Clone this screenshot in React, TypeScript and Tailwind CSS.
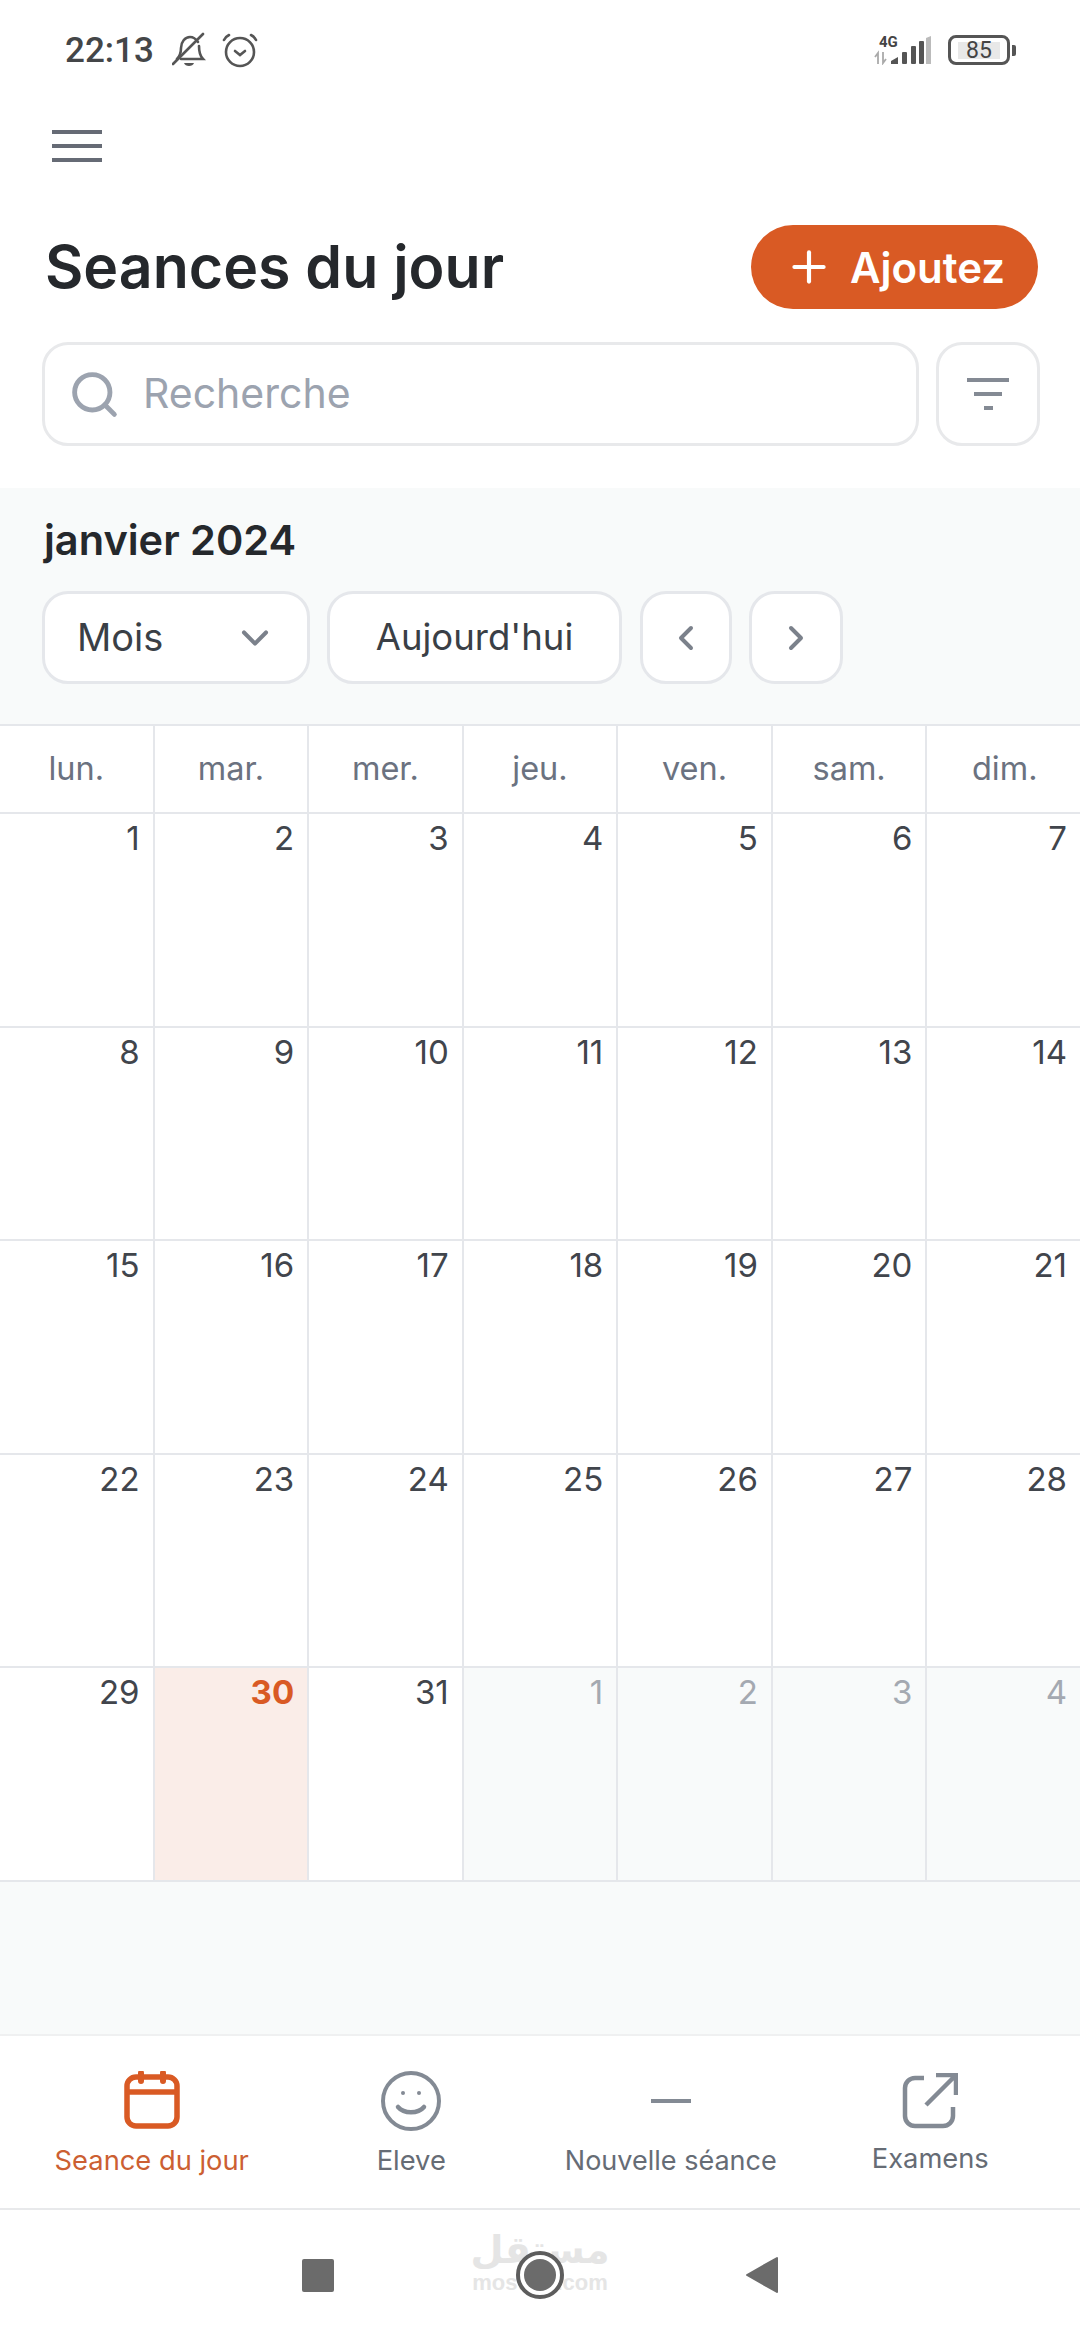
import { ChevronDown, ChevronLeft, ChevronRight, Plus, Search } from 'lucide-react';

const days = ['lun.', 'mar.', 'mer.', 'jeu.', 'ven.', 'sam.', 'dim.'];

const weeks = [
  [1, 2, 3, 4, 5, 6, 7],
  [8, 9, 10, 11, 12, 13, 14],
  [15, 16, 17, 18, 19, 20, 21],
  [22, 23, 24, 25, 26, 27, 28],
  [29, 30, 31, 1, 2, 3, 4],
];

function StatusBar() {
  return (
    <div className="h-[100px] flex items-center justify-between pl-[65px] pr-[64px] font-['Roboto',sans-serif]">
      <div className="flex items-center">
        <span className="text-[35px] leading-none font-medium text-[#444648]">22:13</span>
        <svg className="ml-[18px]" width="34" height="36" viewBox="0 0 34 36" fill="none" stroke="#555" strokeWidth="2.6">
          <path d="M5 27c3-3 4-6 4-11 0-6 4-11 9-11 4 0 6 2 8 5M27 14c0 6 1 10 4 13H9" strokeLinecap="round" />
          <path d="M1 32 31 2" strokeLinecap="round" />
          <path d="M12 31h10c-1 4-9 4-10 0z" fill="#555" stroke="none" />
        </svg>
        <svg className="ml-[16px]" width="36" height="36" viewBox="0 0 36 36" fill="none" stroke="#555" strokeWidth="2.6" strokeLinecap="round">
          <circle cx="18" cy="20" r="14" />
          <path d="m13 19 5 4 5-4" />
          <path d="M2 8c1-2 3-4 5-5M34 8c-1-2-3-4-5-5" />
        </svg>
      </div>
      <div className="flex items-center">
        <svg className="-mt-[8px]" width="58" height="38" viewBox="0 -8 58 38">
          <text x="5" y="12" fontSize="15" fontWeight="700" fill="#444" fontFamily="Roboto, sans-serif">4G</text>
          <path d="M4 29V18L1 22M9 17v11l3-4" fill="none" stroke="#aaa" strokeWidth="1.8" />
          <path d="M17 29v-3l7-4v7z" fill="#555" />
          <rect x="28" y="17" width="5" height="12" rx="1" fill="#555" />
          <rect x="37" y="11" width="5" height="18" rx="1" fill="#555" />
          <rect x="45" y="6" width="5" height="23" rx="1" fill="#555" />
          <path d="M52 3l5-2v28h-5z" fill="#bbb" />
        </svg>
        <div className="ml-[16px] flex items-center">
          <div className="w-[62px] h-[30px] rounded-[8px] border-[3.5px] border-[#555] flex items-center justify-center">
            <span className="w-[42px] h-[17px] bg-[#e8e8e8] flex items-center justify-center text-[23px] leading-none text-[#444]">85</span>
          </div>
          <span className="ml-[2px] w-[4px] h-[11px] rounded-r-[2px] bg-[#555]" />
        </div>
      </div>
    </div>
  );
}

function Header() {
  return (
    <div className="px-[42px]">
      <div className="h-[62px] pt-[30px] pl-[10px] box-content">
        <div className="w-[50px] flex flex-col gap-[10px]">
          <span className="h-[4px] bg-[#666b75]" />
          <span className="h-[4px] bg-[#666b75]" />
          <span className="h-[4px] bg-[#666b75]" />
        </div>
      </div>
      <div className="mt-[33px] flex items-center justify-between">
        <h1 className="pl-[3px] text-[59px] leading-[84px] font-semibold text-[#25282c]">Seances du jour</h1>
        <button className="w-[287px] h-[84px] rounded-full bg-[#d95a24] flex items-center justify-center gap-[16px] text-white text-[42px] font-semibold">
          <Plus size={50} strokeWidth={2} />
          Ajoutez
        </button>
      </div>
      <div className="mt-[33px] flex items-stretch justify-between h-[104px]">
        <div className="w-[877px] rounded-[26px] border-[3px] border-[#e8e9eb] flex items-center pl-[23px]">
          <Search size={53} strokeWidth={2.2} className="text-[#9ca3af]" />
          <span className="ml-[22px] text-[41px] text-[#9ca3af]">Recherche</span>
        </div>
        <div className="w-[104px] mr-[-2px] rounded-[26px] border-[3px] border-[#e8e9eb] flex flex-col items-center justify-center gap-[10px]">
          <span className="w-[42px] h-[4px] bg-[#848a94]" />
          <span className="w-[28px] h-[4px] bg-[#848a94]" />
          <span className="w-[9px] h-[4px] bg-[#848a94]" />
        </div>
      </div>
    </div>
  );
}

function Toolbar() {
  const box = 'h-[93px] rounded-[26px] border-[3px] border-[#e5e7eb] bg-white flex items-center text-[#3a3f46]';
  return (
    <div className="mt-[42px] h-[236px] bg-[#f8fafa] px-[42px] pt-[28px]">
      <h2 className="pl-[2px] text-[41.5px] leading-[48px] font-semibold text-[#25282c]">janvier 2024</h2>
      <div className="mt-[27px] flex items-center">
        <div className={`${box} w-[268px] justify-between pl-[32px] pr-[30px] text-[38px]`}>
          <span>Mois</span>
          <ChevronDown size={44} strokeWidth={2.2} className="text-[#7b818b]" />
        </div>
        <div className={`${box} ml-[17px] w-[295px] justify-center text-[36.5px]`}>Aujourd'hui</div>
        <div className={`${box} ml-[18px] w-[92px] justify-center`}>
          <ChevronLeft size={40} strokeWidth={2.4} className="text-[#7b818b]" />
        </div>
        <div className={`${box} ml-[17px] w-[94px] justify-center`}>
          <ChevronRight size={40} strokeWidth={2.4} className="text-[#7b818b]" />
        </div>
      </div>
    </div>
  );
}

function Calendar() {
  return (
    <div className="w-[1082px] border-t-2 border-[#e5e7eb] font-['Inter',sans-serif]">
      <div className="grid grid-cols-7 h-[86px]">
        {days.map((d, i) => (
          <div
            key={d}
            className={`flex items-center justify-center text-[32.5px] text-[#6b7280] ${i < 6 ? 'border-r-2 border-[#e5e7eb]' : ''}`}
          >
            {d}
          </div>
        ))}
      </div>
      {weeks.map((week, w) => (
        <div key={w} className="grid grid-cols-7 h-[213.6px] border-t-2 border-[#e5e7eb]">
          {week.map((n, i) => {
            const today = w === 4 && n === 30;
            const other = w === 4 && i > 2;
            return (
              <div
                key={i}
                className={`pt-[2px] text-right text-[33px] leading-[44px] ${i < 6 ? 'pr-[13px] border-r-2 border-[#e5e7eb]' : 'pr-[15px]'} ${
                  today ? 'bg-[#faede8] text-[#d95a24] font-bold' : other ? 'bg-[#f8fafa] text-[#a4a9b1]' : 'bg-white text-[#41454c]'
                }`}
              >
                {n}
              </div>
            );
          })}
        </div>
      ))}
    </div>
  );
}

function TabBar() {
  return (
    <div className="h-[176px] border-t-2 border-[#eff0f1] border-b-2 border-b-[#e8e9eb] pl-[22px] pr-[20px] grid grid-cols-4 bg-white">
      <div className="flex flex-col items-center pt-[35px]">
        <svg width="56" height="58" viewBox="0 0 56 58" fill="none" stroke="#d95a24" strokeWidth="5.5">
          <rect x="3" y="6" width="50" height="49" rx="9" />
          <path d="M3 21h50" />
          <path d="M17 2v8M39 2v8" strokeLinecap="round" strokeWidth="6" />
        </svg>
        <span className="mt-[14px] text-[27.3px] leading-[36px] text-[#cc5f32]">Seance du jour</span>
      </div>
      <div className="flex flex-col items-center pt-[35px]">
        <svg width="60" height="60" viewBox="0 0 60 60" fill="none" stroke="#838a94" strokeWidth="4">
          <circle cx="30" cy="30" r="28" />
          <path d="M17 36c6 7 20 7 26 0" strokeWidth="4.5" strokeLinecap="round" />
          <circle cx="22" cy="22" r="2" fill="#838a94" stroke="none" />
          <circle cx="38" cy="22" r="2" fill="#838a94" stroke="none" />
        </svg>
        <span className="mt-[12px] text-[27.3px] leading-[36px] text-[#666c75]">Eleve</span>
      </div>
      <div className="flex flex-col items-center pt-[35px]">
        <div className="h-[60px] flex items-center">
          <span className="w-[40px] h-[4px] bg-[#838a94]" />
        </div>
        <span className="mt-[12px] text-[27px] leading-[36px] text-[#666c75]">Nouvelle séance</span>
      </div>
      <div className="flex flex-col items-center pt-[37px]">
        <svg width="56" height="56" viewBox="0 0 56 56" fill="none" stroke="#838a94" strokeWidth="4.5">
          <path d="M22 5h-9a10 10 0 0 0-10 10v28a10 10 0 0 0 10 10h28a10 10 0 0 0 10-10v-9" />
          <path d="M24 32 53 3M34 2h20v20" />
        </svg>
        <span className="mt-[12px] text-[27.3px] leading-[36px] text-[#666c75]">Examens</span>
      </div>
    </div>
  );
}

function SystemNav() {
  return (
    <div className="relative h-[130px] flex items-center justify-center bg-white">
      {/* watermark sits under the home button */}
      <div className="absolute left-[465px] top-[18px] w-[150px] text-center text-[#e5e5e5] font-bold">
        <div dir="rtl" className="h-[44px] text-[38px] leading-[44px] font-['DejaVu_Sans',sans-serif]">مستقل</div>
        <div className="h-[22px] text-[22px] leading-[22px] font-['Liberation_Sans',sans-serif]">mostaql.com</div>
      </div>
      <div className="relative flex items-center w-[476px] justify-between">
        <span className="w-[32px] h-[33px] rounded-[2px] bg-[#6b6b6b]" />
        <span className="w-[48px] h-[48px] rounded-full border-[4px] border-[#5d5d5d] bg-white flex items-center justify-center">
          <span className="w-[32px] h-[32px] rounded-full bg-[#6b6b6b]" />
        </span>
        <svg width="32" height="38" viewBox="0 0 32 38">
          <path d="M31 2v34L1 19z" fill="#6b6b6b" stroke="#6b6b6b" strokeLinejoin="round" strokeWidth="2" />
        </svg>
      </div>
    </div>
  );
}

export default function App() {
  return (
    <div className="w-[1080px] h-[2340px] flex flex-col bg-white overflow-hidden font-['Inter',sans-serif]">
      <StatusBar />
      <Header />
      <Toolbar />
      <Calendar />
      <div className="flex-1 bg-[#f8fafa] border-t-2 border-[#e5e7eb]" />
      <TabBar />
      <SystemNav />
    </div>
  );
}
